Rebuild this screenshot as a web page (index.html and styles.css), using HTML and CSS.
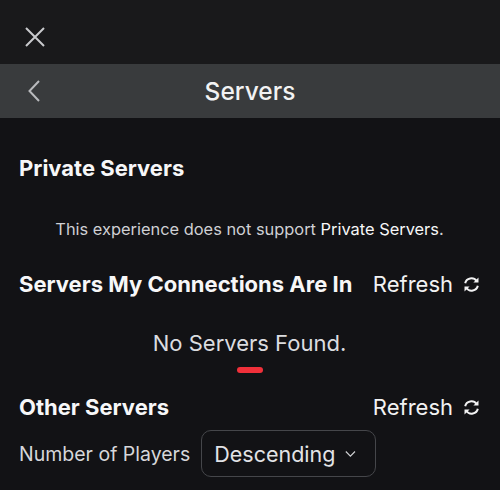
FILE: index.html
```html
<!DOCTYPE html>
<html lang="en">

<head>
    <meta charset="UTF-8">
    <meta name="viewport" content="width=device-width, initial-scale=1.0">
    <title>Servers</title>
    <link rel="stylesheet" href="styles.css">
</head>

<body>
    <div class="topbar">
        <svg class="close-icon" width="20" height="20" viewBox="0 0 20 20">
            <path d="M1 1 L19 19 M19 1 L1 19" stroke="#c9cacd" stroke-width="2" fill="none" />
        </svg>
    </div>

    <div class="navbar">
        <svg class="back-icon" width="12" height="22" viewBox="0 0 12 22">
            <path d="M11 1 L1.5 11 L11 21" stroke="#b9babd" stroke-width="2" fill="none" />
        </svg>
        <span class="nav-title">Servers</span>
    </div>

    <div class="content">
        <div class="section-head">
            <h2>Private Servers</h2>
        </div>
        <p class="notice">This experience does not support <span class="strong">Private Servers</span>.</p>

        <div class="section-head">
            <h2>Servers My Connections Are In</h2>
            <button class="refresh">Refresh
                <svg width="17" height="15" viewBox="0 0 17 15">
                    <path d="M2.2 6.2 A6.3 6 0 0 1 13.6 4" stroke="#f2f2f3" stroke-width="2" fill="none" />
                    <path d="M14.8 8.8 A6.3 6 0 0 1 3.4 11" stroke="#f2f2f3" stroke-width="2" fill="none" />
                    <path d="M15.5 0.5 L15.5 5.6 L10.4 5.6 Z" fill="#f2f2f3" />
                    <path d="M1.5 14.5 L1.5 9.4 L6.6 9.4 Z" fill="#f2f2f3" />
                </svg>
            </button>
        </div>
        <p class="empty">No Servers Found.</p>
        <div class="loader"></div>

        <div class="section-head other">
            <h2>Other Servers</h2>
            <button class="refresh">Refresh
                <svg width="17" height="15" viewBox="0 0 17 15">
                    <path d="M2.2 6.2 A6.3 6 0 0 1 13.6 4" stroke="#f2f2f3" stroke-width="2" fill="none" />
                    <path d="M14.8 8.8 A6.3 6 0 0 1 3.4 11" stroke="#f2f2f3" stroke-width="2" fill="none" />
                    <path d="M15.5 0.5 L15.5 5.6 L10.4 5.6 Z" fill="#f2f2f3" />
                    <path d="M1.5 14.5 L1.5 9.4 L6.6 9.4 Z" fill="#f2f2f3" />
                </svg>
            </button>
        </div>

        <div class="sort-row">
            <span class="sort-label">Number of Players</span>
            <div class="dropdown">
                <span>Descending</span>
                <svg width="13" height="8" viewBox="0 0 13 8">
                    <path d="M1 1 L6.5 6.5 L12 1" stroke="#d0d1d4" stroke-width="1.4" fill="none" />
                </svg>
            </div>
        </div>
    </div>
</body>

</html>
```

FILE: styles.css
```css
body {
    font-family: Inter, "Noto Sans", sans-serif;
    background-color: #121215;
    color: #f7f7f8;
    margin: 0;
    width: 500px;
    height: 490px;
    overflow: hidden;
}

.topbar {
    height: 64px;
    background-color: #19191b;
    display: flex;
    align-items: center;
    padding-left: 25px;
    box-sizing: border-box;
}

.close-icon {
    margin-top: 10px;
}

.navbar {
    height: 54px;
    background-color: #393b3d;
    display: flex;
    align-items: center;
    justify-content: center;
    position: relative;
}

.back-icon {
    position: absolute;
    left: 28px;
    top: 16px;
}

.nav-title {
    font-size: 24.5px;
    font-weight: 500;
    color: #f2f2f3;
}

.content {
    padding: 0 20px 0 19px;
}

.section-head {
    display: flex;
    align-items: center;
    justify-content: space-between;
    height: 36px;
    margin-top: 32px;
}

.section-head h2 {
    margin: 0;
    font-size: 22px;
    font-weight: 700;
    color: #f7f7f8;
}

.refresh {
    background: none;
    border: none;
    padding: 0;
    font-family: inherit;
    font-size: 22px;
    color: #f2f2f3;
    display: flex;
    align-items: center;
    gap: 10px;
}

.notice {
    margin: 33px 0 0;
    text-align: center;
    font-size: 16.4px;
    color: #cfd0d4;
}

.notice .strong {
    color: #f7f7f8;
}

.notice + .section-head {
    margin-top: 27px;
}

.empty {
    margin: 28px 0 0;
    text-align: center;
    font-size: 22px;
    color: #dcdde0;
}

.loader {
    width: 26px;
    height: 6px;
    border-radius: 3px;
    background-color: #f0303a;
    margin: 11px auto 0;
}

.section-head.other {
    margin-top: 16px;
}

.sort-row {
    display: flex;
    align-items: center;
    gap: 11px;
    margin-top: 5px;
}

.sort-label {
    font-size: 19.5px;
    color: #d6d7da;
}

.dropdown {
    width: 175px;
    height: 47px;
    box-sizing: border-box;
    border: 1px solid #45464a;
    border-radius: 10px;
    display: flex;
    align-items: center;
    padding: 0 19px 0 12px;
    gap: 10px;
    font-size: 21.5px;
    color: #e2e3e6;
}
```
